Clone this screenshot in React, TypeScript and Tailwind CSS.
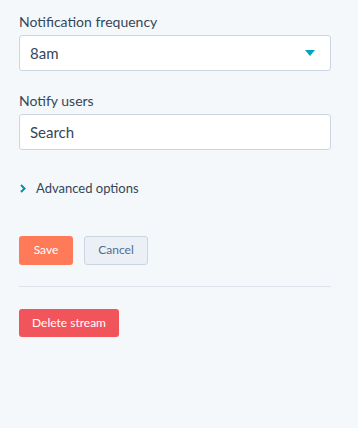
export default function App() {
  return (
    <div className="min-h-[428px] w-full bg-[#f5f8fa] pl-[19px] pt-[12px] font-['Lato',sans-serif] text-[#33475b]">
      <div className="w-[312px]">
        <label className="block text-[14px] leading-[20px]">Notification frequency</label>
        <div className="mt-[3px] flex h-[36px] items-center justify-between rounded-[3px] border border-[#cbd6e2] bg-white pl-[10px] pr-[15px]">
          <span className="text-[15px]">8am</span>
          <svg width="10" height="6" viewBox="0 0 10 6">
            <path d="M0 0 H10 L5 6 Z" fill="#00a4bd" />
          </svg>
        </div>

        <label className="mt-[20px] block text-[14px] leading-[20px]">Notify users</label>
        <div className="mt-[3px] flex h-[36px] items-center rounded-[3px] border border-[#cbd6e2] bg-white pl-[10px]">
          <span className="text-[15px] text-[#33475b]">Search</span>
        </div>

        <div className="mt-[29px] flex items-center">
          <svg width="6" height="9" viewBox="0 0 6 9" className="ml-px">
            <path d="M1 1 L4.5 4.5 L1 8" fill="none" stroke="#0091ae" strokeWidth="2" />
          </svg>
          <span className="ml-[10px] text-[13px]">Advanced options</span>
        </div>

        <div className="mt-[37px] flex gap-[11px]">
          <button className="h-[29px] w-[54px] rounded-[3px] bg-[#ff7a59] text-[12px] text-white">Save</button>
          <button className="h-[29px] w-[64px] rounded-[3px] border border-[#cbd6e2] bg-[#eaf0f6] text-[12px] text-[#506e91]">
            Cancel
          </button>
        </div>

        <div className="mt-[21px] h-px bg-[#dfe3eb]" />

        <button className="mt-[22px] h-[28px] w-[100px] rounded-[3px] bg-[#f2545b] text-[12px] text-white">
          Delete stream
        </button>
      </div>
    </div>
  );
}
